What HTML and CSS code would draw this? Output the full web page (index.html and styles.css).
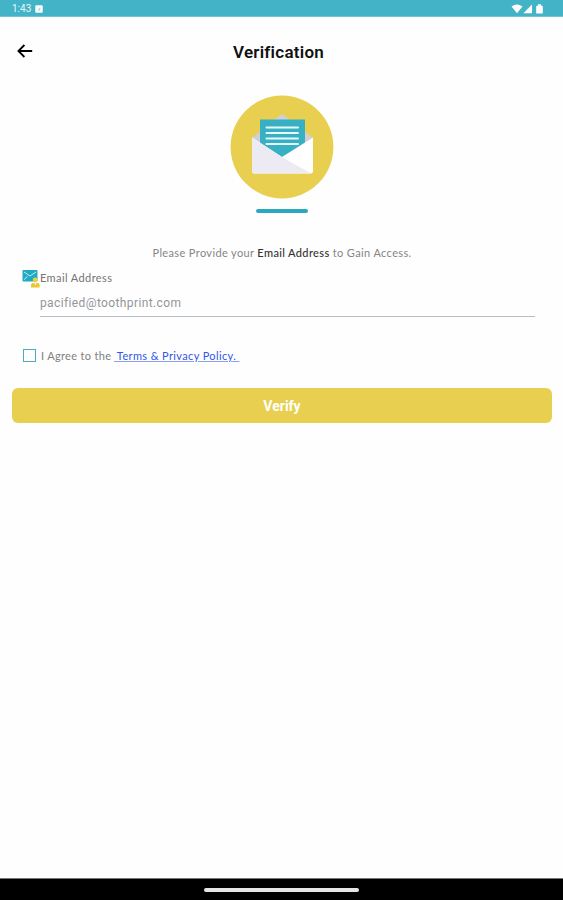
FILE: index.html
```html
<!DOCTYPE html>
<html lang="en">
<head>
  <meta charset="UTF-8">
  <meta name="viewport" content="width=device-width, initial-scale=1.0">
  <title>Verification</title>
  <link rel="stylesheet" href="styles.css">
</head>
<body>
  <div class="status-bar">
    <span class="time">1:43</span>
    <svg class="app-icon" width="8" height="8" viewBox="0 0 8 8">
      <rect x="0.3" y="0.3" width="7.4" height="7.4" rx="1" fill="#fff"/>
      <path d="M3 5.2 L5 2.8 V5 Z" fill="#a3d8e2" stroke="#a3d8e2" stroke-width="0.7"/>
    </svg>
    <svg class="system-icons" width="34" height="10" viewBox="0 0 34 10">
      <path d="M0.5 2.6 Q6 -1.6 11.5 2.6 L6 9.2 Z" fill="#fff"/>
      <path d="M12.4 9.2 L21 0.6 V9.2 Z" fill="#fff"/>
      <path d="M27 1.2 V0.2 H30 V1.2 L31.8 2.2 V9.6 H25.2 V2.2 Z" fill="#fff"/>
    </svg>
  </div>

  <header class="header">
    <button class="back-btn" aria-label="Back">
      <svg width="16" height="14" viewBox="0 0 16 14">
        <path d="M15.2 7 H1.6 M7.4 1 L1.4 7 L7.4 13" fill="none" stroke="#000" stroke-width="1.8"/>
      </svg>
    </button>
    <h1>Verification</h1>
  </header>

  <main class="main">
    <svg class="mail-logo" width="104" height="104" viewBox="0 0 104 104">
      <circle cx="52" cy="52" r="51.4" fill="#e8cf4f"/>
      <path d="M22 43 L49 21 Q52 18.5 55 21 L83 43 V50 H22 Z" fill="#cfcfd4"/>
      <path d="M30 24.5 H75 V50 L52 62 L30 50 Z" fill="#37b0c4"/>
      <path d="M36.5 32.5 H68 M36.5 38 H68 M36.5 43.5 H68 M36.5 49 H68" stroke="#e9fafc" stroke-width="2" stroke-linecap="round"/>
      <path d="M22 42.5 L52 62 L83 42.5 V76 Q83 78.5 80.5 78.5 H24.5 Q22 78.5 22 76 Z" fill="#fff"/>
      <path d="M22 42.5 L52 62 L81 78.5 H24.5 Q22 78.5 22 76 Z" fill="#ecebf4"/>
    </svg>
    <div class="accent"></div>

    <p class="intro">Please Provide your <b>Email Address</b> to Gain Access.</p>

    <div class="field">
      <svg class="field-icon" width="18" height="18" viewBox="0 0 18 18">
        <rect x="0.5" y="0" width="15" height="11.5" rx="1" fill="#20a9c3"/>
        <path d="M2 2 L8 6 L14 2 M2 9.5 L5.5 6.5" fill="none" stroke="#c2edf2" stroke-width="1"/>
        <circle cx="13.2" cy="10" r="2.4" fill="#efd044"/>
        <path d="M9 17.5 V15 Q9 13 11 13 H16 Q17.6 13 17.6 15 V17.5 Z" fill="#e9c72e"/>
        <path d="M12.3 13 H14.5 L13.4 15 Z" fill="#fff"/>
      </svg>
      <div class="field-body">
        <label for="email">Email Address</label>
        <input type="email" id="email" placeholder="pacified@toothprint.com">
      </div>
    </div>

    <div class="agree">
      <input type="checkbox" id="agree">
      <label for="agree">I Agree to the</label>
      <a href="#">&nbsp;Terms &amp; Privacy Policy.&nbsp;</a>
    </div>

    <button class="verify-btn">Verify</button>
  </main>

  <div class="nav-bar"><div class="pill"></div></div>
</body>
</html>
```

FILE: styles.css
```css
* { box-sizing: border-box; }
body { font-family: Roboto, sans-serif; margin: 0; display: flex; flex-direction: column; height: 100vh; background: #fefefe; color: #111; }

.status-bar { height: 17px; background: #43b3c7; display: flex; align-items: center; padding: 0 18px 0 12px; border-bottom: 1px solid #6fc5d4; }
.time { color: #e6f9fb; font-size: 10px; line-height: 16px; width: 23px; padding-top: 2px; }
.app-icon { margin-top: 1px; }
.system-icons { margin-left: auto; margin-top: 2px; }

.header { height: 68px; display: grid; grid-template-columns: 50px 1fr 50px; align-items: center; }
.back-btn { background: none; border: none; padding: 0; margin: 0 0 1px 17px; width: 16px; height: 14px; }
.back-btn svg { display: block; }
.header h1 { margin: 1px 0 0 -6px; font-size: 17px; line-height: 20px; font-weight: 600; text-align: center; letter-spacing: 0.25px; }

.main { flex: 1; display: flex; flex-direction: column; padding: 9px 11px 0 12px; }
.mail-logo { align-self: center; flex-shrink: 0; margin-top: 1px; }
.accent { width: 52px; height: 4px; border-radius: 2px; background: #2ba8bd; margin: 10px auto 0; }

.intro { font-family: Lato, sans-serif; margin: 32px 0 0; font-size: 11px; line-height: 16px; letter-spacing: 0.37px; text-align: center; color: #858585; white-space: nowrap; }
.intro b { color: #333; font-weight: 500; }

.field { display: flex; margin: 9px 17px 0 10px; }
.field-icon { flex-shrink: 0; }
.field-body { flex: 1; display: flex; flex-direction: column; }
.field label { font-family: Lato, sans-serif; font-size: 11px; line-height: 16px; letter-spacing: 0.4px; color: #747474; }
.field input { font-family: Roboto, sans-serif; font-size: 12px; letter-spacing: 0.38px; height: 31px; border: none; border-bottom: 1px solid #b9bcc2; padding: 3px 0 0; background: none; outline: none; }
.field input::placeholder { color: #92969a; opacity: 1; }

.agree { display: flex; align-items: center; margin: 30px 0 0 11px; height: 16px; font-family: Lato, sans-serif; font-size: 11px; white-space: nowrap; }
.agree input { appearance: none; width: 13px; height: 13px; margin: 0 5px 0 0; border: 1px solid #45aec1; background: #fff; }
.agree label { color: #808080; width: 73px; letter-spacing: 0.33px; padding-top: 1px; }
.agree a { color: #3156e8; letter-spacing: 0.37px; text-decoration: underline; text-decoration-color: #8aa0f4; }

.verify-btn { height: 35px; margin-top: 25px; border: none; border-radius: 6px; background: #e8cf4f; color: #fff; font-family: Roboto, sans-serif; font-size: 14px; font-weight: 700; padding: 1px 0 0; }

.nav-bar { height: 22px; background: #000; border-top: 1px solid #777; display: flex; justify-content: center; align-items: center; }
.pill { width: 155px; height: 4px; border-radius: 2px; background: #e4e6e5; }
```
